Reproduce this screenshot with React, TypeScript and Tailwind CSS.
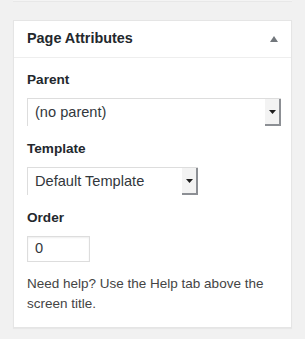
import type { ReactNode } from 'react'

function SelectArrow() {
  return (
    <span className="flex h-full w-[16px] shrink-0 items-center justify-center border-b-2 border-r-2 border-[#8c8f94] bg-[#f3f3f3]">
      <svg className="h-[4px] w-[7px]" viewBox="0 0 7 4">
        <path d="M0 0h7L3.5 4z" fill="#1e1e1e" />
      </svg>
    </span>
  )
}

function FakeSelect({ value, width }: { value: string; width: string }) {
  return (
    <div className={`flex h-[28px] items-stretch border-l border-t border-[#dddddd] bg-white ${width}`}>
      <span className="flex flex-1 items-center pl-[7px] text-[14.6px] text-[#32373c]">{value}</span>
      <SelectArrow />
    </div>
  )
}

function Label({ children }: { children: ReactNode }) {
  return <p className="text-[13.6px] font-semibold leading-[20px] text-[#23282d]">{children}</p>
}

export default function App() {
  return (
    <div className="min-h-[339px] bg-[#f1f1f1] font-['Liberation_Sans',Arial,sans-serif]">
      {/* previous metabox edge */}
      <div className="ml-[13px] h-[2px] w-[279px] border-b border-[#e8e8e8] bg-[#f4f4f4]" />

      <div className="ml-[13px] mt-[18px] w-[279px] border border-[#e5e5e5] bg-white shadow-[0_1px_1px_rgba(0,0,0,0.04)]">
        <div className="flex h-[37px] items-center justify-between border-b border-[#eeeeee] pl-[13px] pr-[13px]">
          <h2 className="text-[14.4px] font-bold text-[#23282d]">Page Attributes</h2>
          <svg className="h-[6px] w-[8px]" viewBox="0 0 8 6">
            <path d="M4 0l4 6H0z" fill="#72777c" />
          </svg>
        </div>

        <div className="pb-[13px] pl-[13px] pr-[10px] pt-[12px]">
          <Label>Parent</Label>
          <div className="mt-[8px]">
            <FakeSelect value="(no parent)" width="w-[254px]" />
          </div>

          <div className="mt-[13px]">
            <Label>Template</Label>
          </div>
          <div className="mt-[8px]">
            <FakeSelect value="Default Template" width="w-[171px]" />
          </div>

          <div className="mt-[13px]">
            <Label>Order</Label>
          </div>
          <div className="mt-[8px] flex h-[26px] w-[63px] items-center border border-[#dddddd] bg-white pl-[7px] text-[14.6px] text-[#32373c] shadow-[inset_0_1px_2px_rgba(0,0,0,0.07)]">
            0
          </div>

          <p className="mt-[12px] text-[13.5px] leading-[20px] text-[#444444]">
            Need help? Use the Help tab above the screen title.
          </p>
        </div>
      </div>
    </div>
  )
}
